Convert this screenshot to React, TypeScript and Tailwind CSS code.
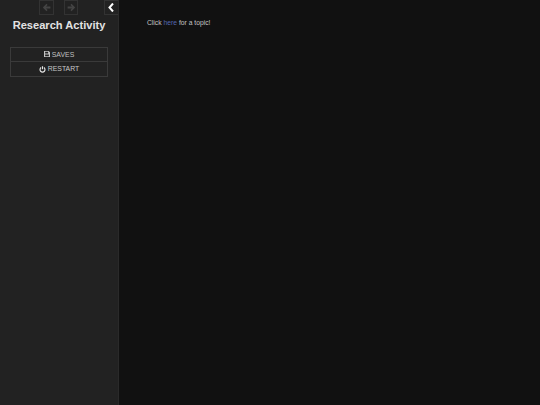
import React from "react";

function Arrow({ dir, color }: { dir: "left" | "right"; color: string }) {
  return (
    <svg width="9" height="9" viewBox="0 0 9 9" style={{ transform: dir === "right" ? "scaleX(-1)" : undefined }}>
      <path d="M4.5 0.8 L0.8 4.5 L4.5 8.2 L5.6 7 L4 5.4 H8.4 V3.6 H4 L5.6 2 Z" fill={color} />
    </svg>
  );
}

function Save() {
  return (
    <svg width="6" height="6" viewBox="0 0 8 8" className="mb-[1px] shrink-0">
      <path d="M0 0 H6.2 L8 1.8 V8 H0 Z M1.5 1 V3.2 H5.5 V1 Z M1.5 4.6 V7 H6.5 V4.6 Z" fill="#c4c4c4" fillRule="evenodd" />
    </svg>
  );
}

function Power() {
  return (
    <svg width="7" height="7" viewBox="0 0 8 9" className="shrink-0" fill="none" stroke="#e4e4e4" strokeWidth="1.5">
      <path d="M2.2 2 A3.2 3.2 0 1 0 5.8 2" />
      <path d="M4 0.3 V4.2" />
    </svg>
  );
}

export default function App() {
  return (
    <div className="flex h-[405px] w-[540px] overflow-hidden bg-[#111111] font-['Liberation_Sans',Arial,sans-serif] antialiased">
      <aside className="flex w-[119px] shrink-0 flex-col border-r border-[#2a2a2a] bg-[#222222]">
        <div className="flex h-[15px] items-start">
          <div className="ml-[39px] flex h-[15px] w-[15px] items-center justify-center border border-[#333333]">
            <Arrow dir="left" color="#444444" />
          </div>
          <div className="ml-[10px] flex h-[15px] w-[15px] items-center justify-center border border-[#333333]">
            <Arrow dir="right" color="#444444" />
          </div>
          <div className="ml-[26px] flex h-[15px] w-[14px] items-center justify-center border border-r-0 border-[#333333]">
            <svg width="7" height="9" viewBox="0 0 7 9">
              <path d="M5 0.5 L1.5 4.5 L5 8.5" fill="none" stroke="#ffffff" strokeWidth="2" />
            </svg>
          </div>
        </div>
        <h1 className="mt-[2px] text-center text-[11.1px] leading-[17px] font-bold text-[#e2e2e2]">Research Activity</h1>
        <div className="mx-[10px] mt-[13px] flex flex-col border border-[#3a3a3a]">
          <div className="flex h-[14px] items-center justify-center gap-[1px] border-b border-[#3a3a3a] text-[6.9px] text-[#c0c0c0]">
            <Save />
            <span className="ml-[1px] mt-[1px]">SAVES</span>
          </div>
          <div className="flex h-[14px] items-center justify-center gap-[1px] text-[6.9px] text-[#c8c8c8]">
            <Power />
            <span className="ml-[1px] mt-[1px]">RESTART</span>
          </div>
        </div>
      </aside>
      <main className="flex-1 pl-[28px] pt-[18px]">
        <p className="text-[6.75px] leading-[10px] text-[#c4c4c4]">
          Click <span className="text-[#5568b0]">here</span> for a topic!
        </p>
      </main>
    </div>
  );
}
